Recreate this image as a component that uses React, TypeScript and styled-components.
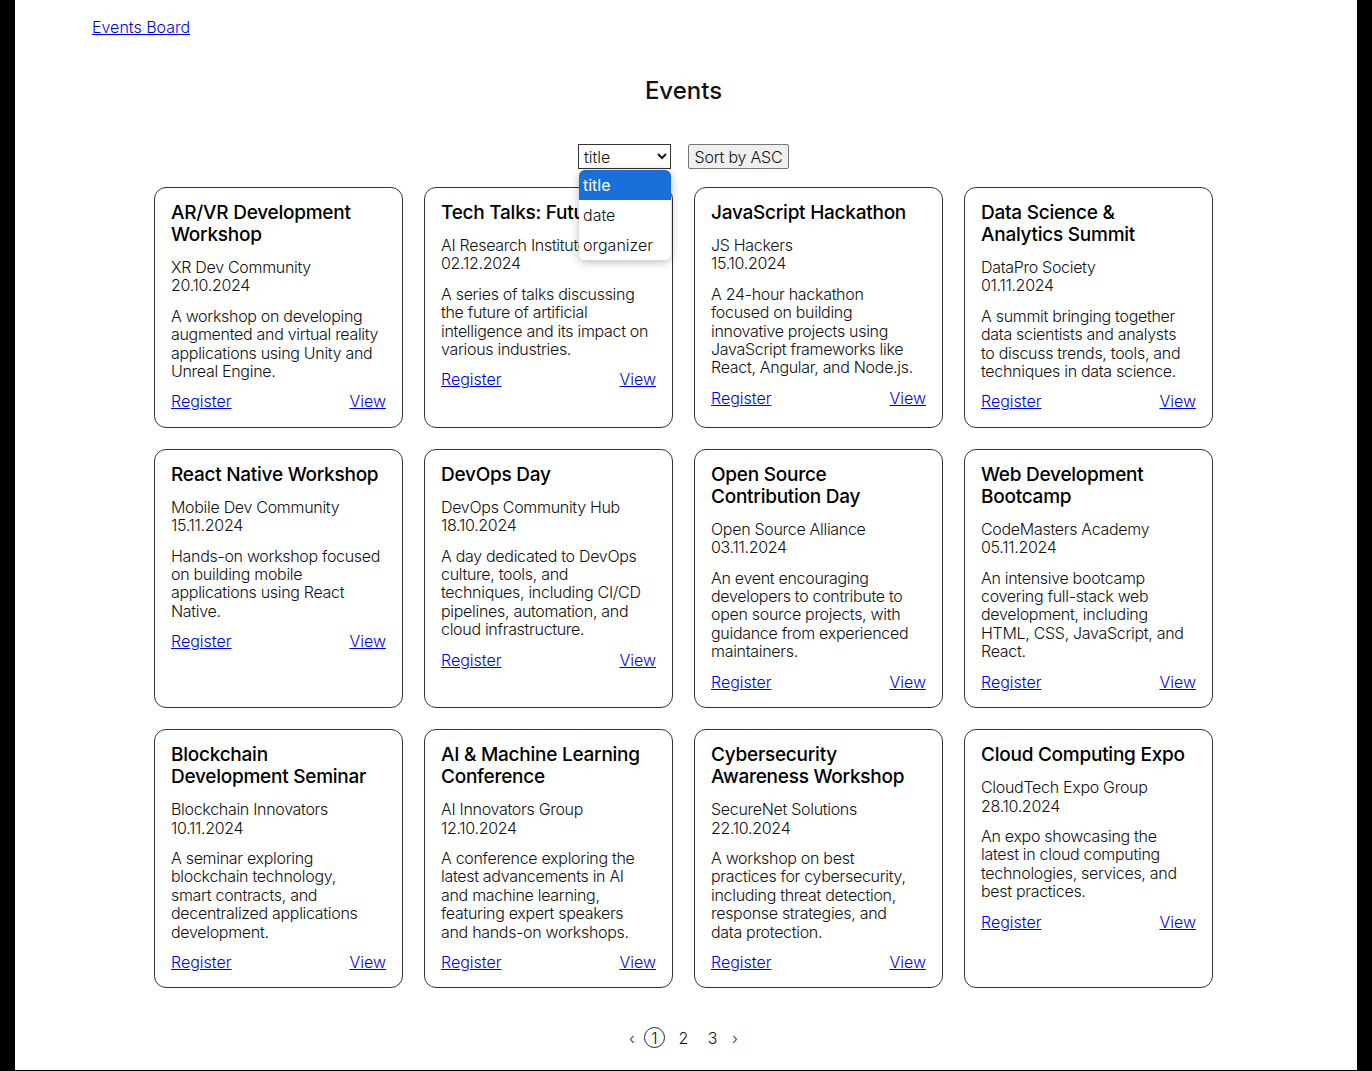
import React from "react";
import styled, { createGlobalStyle } from "styled-components";

const GlobalStyle = createGlobalStyle`
  html, body {
    margin: 0;
    padding: 0;
    background: #000;
  }
  body {
    font-family: Inter, "Noto Sans", "Liberation Sans", sans-serif;
    color: #111;
  }
`;

type EventItem = {
  title: string;
  organizer: string;
  date: string;
  description: string;
};

// descriptions keep the line breaks of the board's layout
const events: EventItem[] = [
  {
    title: "AR/VR Development Workshop",
    organizer: "XR Dev Community",
    date: "20.10.2024",
    description:
      "A workshop on developing\naugmented and virtual reality\napplications using Unity and\nUnreal Engine.",
  },
  {
    title: "Tech Talks: Future of AI",
    organizer: "AI Research Institute",
    date: "02.12.2024",
    description:
      "A series of talks discussing\nthe future of artificial\nintelligence and its impact on\nvarious industries.",
  },
  {
    title: "JavaScript Hackathon",
    organizer: "JS Hackers",
    date: "15.10.2024",
    description:
      "A 24-hour hackathon\nfocused on building\ninnovative projects using\nJavaScript frameworks like\nReact, Angular, and Node.js.",
  },
  {
    title: "Data Science & Analytics Summit",
    organizer: "DataPro Society",
    date: "01.11.2024",
    description:
      "A summit bringing together\ndata scientists and analysts\nto discuss trends, tools, and\ntechniques in data science.",
  },
  {
    title: "React Native Workshop",
    organizer: "Mobile Dev Community",
    date: "15.11.2024",
    description:
      "Hands-on workshop focused\non building mobile\napplications using React\nNative.",
  },
  {
    title: "DevOps Day",
    organizer: "DevOps Community Hub",
    date: "18.10.2024",
    description:
      "A day dedicated to DevOps\nculture, tools, and\ntechniques, including CI/CD\npipelines, automation, and\ncloud infrastructure.",
  },
  {
    title: "Open Source Contribution Day",
    organizer: "Open Source Alliance",
    date: "03.11.2024",
    description:
      "An event encouraging\ndevelopers to contribute to\nopen source projects, with\nguidance from experienced\nmaintainers.",
  },
  {
    title: "Web Development Bootcamp",
    organizer: "CodeMasters Academy",
    date: "05.11.2024",
    description:
      "An intensive bootcamp\ncovering full-stack web\ndevelopment, including\nHTML, CSS, JavaScript, and\nReact.",
  },
  {
    title: "Blockchain Development Seminar",
    organizer: "Blockchain Innovators",
    date: "10.11.2024",
    description:
      "A seminar exploring\nblockchain technology,\nsmart contracts, and\ndecentralized applications\ndevelopment.",
  },
  {
    title: "AI & Machine Learning Conference",
    organizer: "AI Innovators Group",
    date: "12.10.2024",
    description:
      "A conference exploring the\nlatest advancements in AI\nand machine learning,\nfeaturing expert speakers\nand hands-on workshops.",
  },
  {
    title: "Cybersecurity Awareness Workshop",
    organizer: "SecureNet Solutions",
    date: "22.10.2024",
    description:
      "A workshop on best\npractices for cybersecurity,\nincluding threat detection,\nresponse strategies, and\ndata protection.",
  },
  {
    title: "Cloud Computing Expo",
    organizer: "CloudTech Expo Group",
    date: "28.10.2024",
    description:
      "An expo showcasing the\nlatest in cloud computing\ntechnologies, services, and\nbest practices.",
  },
];

const SPage = styled.div`
  background: #fff;
  margin: 0 15px;
  padding: 0 5px 0 0;
  min-height: 1070px;
  box-sizing: border-box;
  font-size: 16px;
`;

const SHeader = styled.header`
  padding: 18px 0 0 77px;
  height: 36px;
  box-sizing: border-box;
  line-height: 18px;
`;

const SLink = styled.a`
  color: #0000ee;
  text-decoration: underline;
  font-weight: 300;
  font-size: 16px;
  line-height: 18.4px;
`;

const STitle = styled.h1`
  margin: 0;
  padding-top: 40px;
  text-align: center;
  font-size: 24px;
  font-weight: 500;
  line-height: 30px;
  color: #111;
`;

const SControls = styled.div`
  display: flex;
  justify-content: center;
  gap: 17px;
  margin-top: 38px;
  height: 25px;
`;

const SSelectWrap = styled.div`
  position: relative;
  width: 93px;
`;

const SSelect = styled.select`
  width: 93px;
  height: 25px;
  font-family: inherit;
  font-size: 16px;
  font-weight: 300;
  border: 1px solid #333;
  border-radius: 0;
  background: #fff;
  color: #111;
  padding: 0 1px;
`;

const SOptionList = styled.ul`
  position: absolute;
  top: 26px;
  left: 1px;
  width: 92px;
  margin: 0;
  padding: 0;
  list-style: none;
  background: #fff;
  border-radius: 6px;
  box-shadow: 0 2px 10px rgba(0, 0, 0, 0.28);
  overflow: hidden;
  z-index: 10;
`;

const SOption = styled.li<{ $active?: boolean }>`
  height: 30px;
  line-height: 30px;
  padding: 0 4px;
  font-size: 16px;
  font-weight: ${(p) => (p.$active ? 400 : 300)};
  background: ${(p) => (p.$active ? "#1a6ed8" : "#fff")};
  color: ${(p) => (p.$active ? "#fff" : "#111")};
`;

const SButton = styled.button`
  width: 101px;
  height: 25px;
  font-family: inherit;
  font-size: 16px;
  font-weight: 300;
  letter-spacing: -0.2px;
  color: #111;
  background: #efefef;
  border: 1px solid #767676;
  border-radius: 2px;
  padding: 0;
`;

const SGrid = styled.div`
  display: grid;
  grid-template-columns: repeat(4, 249px);
  column-gap: 21px;
  row-gap: 21px;
  justify-content: center;
  margin-top: 18px;
`;

const SCard = styled.article`
  border: 1px solid #333;
  border-radius: 12px;
  padding: 14px 16px 16px;
  display: flex;
  flex-direction: column;
  gap: 12px;
  font-weight: 300;
  line-height: 18.4px;
  color: #111;
`;

const SCardTitle = styled.h3`
  margin: 0;
  font-size: 19px;
  line-height: 22px;
  font-weight: 500;
  letter-spacing: -0.25px;
  color: #000;
`;

const SText = styled.p`
  margin: 0;
  letter-spacing: -0.3px;
  white-space: pre;
`;

const SLinks = styled.div`
  display: flex;
  justify-content: space-between;
`;

const SPagination = styled.nav`
  display: flex;
  justify-content: center;
  align-items: center;
  gap: 8px;
  margin-top: 39px;
  font-size: 16px;
  font-weight: 300;
`;

const SPageItem = styled.span<{ $current?: boolean }>`
  display: inline-flex;
  align-items: center;
  justify-content: center;
  width: 21px;
  height: 21px;
  box-sizing: border-box;
  border-radius: 50%;
  border: ${(p) => (p.$current ? "1px solid #222" : "1px solid transparent")};
  color: #111;
`;

const SArrow = styled.span`
  display: inline-block;
  width: 8px;
  text-align: center;
  font-size: 16px;
  color: #333;
`;

const EventCard = ({ item }: { item: EventItem }) => (
  <SCard>
    <SCardTitle>{item.title}</SCardTitle>
    <SText>{`${item.organizer}\n${item.date}`}</SText>
    <SText>{item.description}</SText>
    <SLinks>
      <SLink href="#">Register</SLink>
      <SLink href="#">View</SLink>
    </SLinks>
  </SCard>
);

export default function App() {
  return (
    <SPage>
      <GlobalStyle />
      <SHeader>
        <SLink href="#">Events Board</SLink>
      </SHeader>
      <STitle>Events</STitle>
      <SControls>
        <SSelectWrap>
          <SSelect defaultValue="title">
            <option value="title">title</option>
            <option value="date">date</option>
            <option value="organizer">organizer</option>
          </SSelect>
          <SOptionList>
            <SOption $active>title</SOption>
            <SOption>date</SOption>
            <SOption>organizer</SOption>
          </SOptionList>
        </SSelectWrap>
        <SButton>Sort by ASC</SButton>
      </SControls>
      <SGrid>
        {events.map((e) => (
          <EventCard key={e.title} item={e} />
        ))}
      </SGrid>
      <SPagination>
        <SArrow>‹</SArrow>
        <SPageItem $current>1</SPageItem>
        <SPageItem>2</SPageItem>
        <SPageItem>3</SPageItem>
        <SArrow>›</SArrow>
      </SPagination>
    </SPage>
  );
}
